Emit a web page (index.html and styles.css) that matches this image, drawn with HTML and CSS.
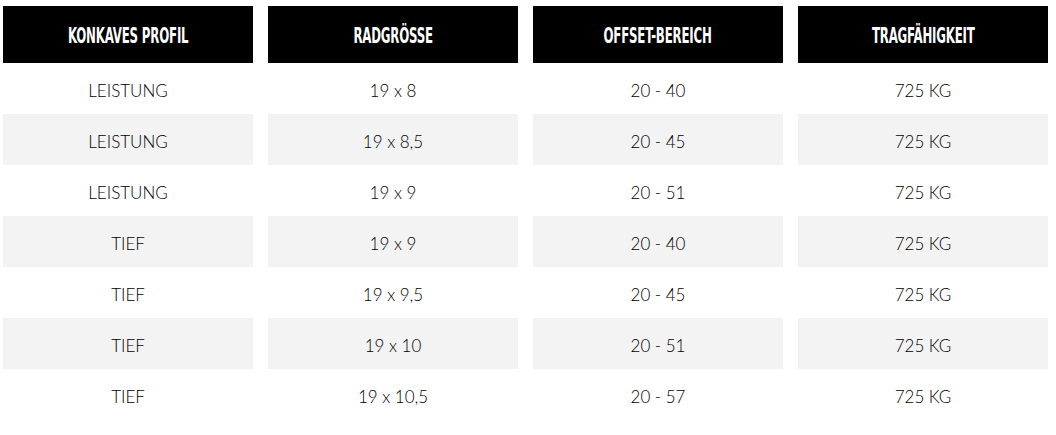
FILE: index.html
```html
<!DOCTYPE html>
<html lang="de">
<head>
<meta charset="utf-8">
<link rel="stylesheet" href="styles.css">
</head>
<body>
<div class="spec">
  <div class="head"><span>KONKAVES PROFIL</span></div>
  <div class="head"><span>RADGRÖSSE</span></div>
  <div class="head"><span>OFFSET-BEREICH</span></div>
  <div class="head"><span>TRAGFÄHIGKEIT</span></div>

  <div class="cell">LEISTUNG</div><div class="cell">19 x 8</div><div class="cell">20 - 40</div><div class="cell">725 KG</div>
  <div class="cell alt">LEISTUNG</div><div class="cell alt">19 x 8,5</div><div class="cell alt">20 - 45</div><div class="cell alt">725 KG</div>
  <div class="cell">LEISTUNG</div><div class="cell">19 x 9</div><div class="cell">20 - 51</div><div class="cell">725 KG</div>
  <div class="cell alt">TIEF</div><div class="cell alt">19 x 9</div><div class="cell alt">20 - 40</div><div class="cell alt">725 KG</div>
  <div class="cell">TIEF</div><div class="cell">19 x 9,5</div><div class="cell">20 - 45</div><div class="cell">725 KG</div>
  <div class="cell alt">TIEF</div><div class="cell alt">19 x 10</div><div class="cell alt">20 - 51</div><div class="cell alt">725 KG</div>
  <div class="cell">TIEF</div><div class="cell">19 x 10,5</div><div class="cell">20 - 57</div><div class="cell">725 KG</div>
</div>
</body>
</html>
```

FILE: styles.css
```css
html, body {
  margin: 0;
  padding: 0;
  background: #fff;
}
.spec {
  display: grid;
  grid-template-columns: repeat(4, 250px);
  grid-template-rows: 57px;
  grid-auto-rows: 51px;
  column-gap: 15px;
  padding: 6px 0 0 3px;
}
.head {
  background: #000;
  color: #fff;
  display: flex;
  align-items: center;
  justify-content: center;
  font-family: "DejaVu Sans Condensed", "DejaVu Sans", sans-serif;
  font-weight: bold;
  font-size: 20.5px;
  padding-top: 2px;
  box-sizing: border-box;
}
.head span {
  display: inline-block;
  transform: scaleX(0.64);
  letter-spacing: -0.3px;
  white-space: nowrap;
}
.cell {
  display: flex;
  align-items: center;
  justify-content: center;
  font-family: "Lato", sans-serif;
  font-weight: 300;
  font-size: 17px;
  color: #000;
  padding-top: 4px;
  box-sizing: border-box;
}
.alt {
  background: #f3f3f3;
}
```
